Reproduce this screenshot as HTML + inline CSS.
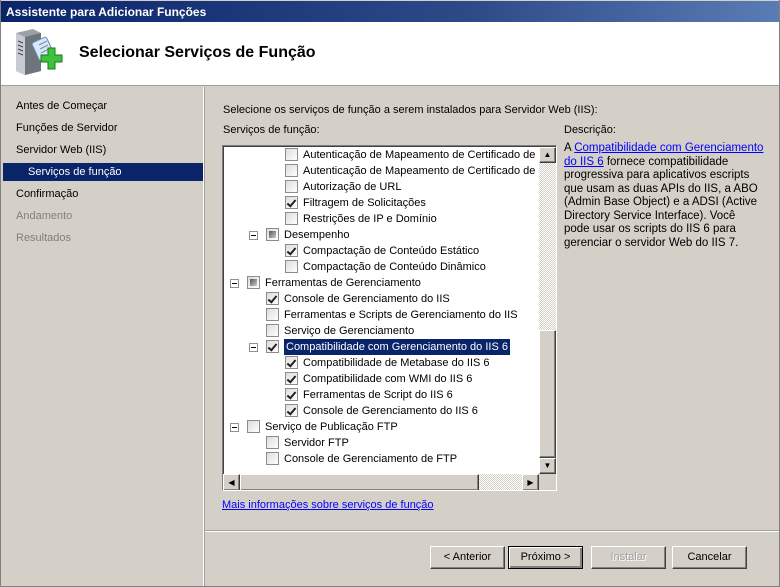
<!DOCTYPE html>
<html><head><meta charset="utf-8"><style>
*{margin:0;padding:0;box-sizing:border-box}
body{width:780px;height:587px;overflow:hidden;font-family:"Liberation Sans",Tahoma,sans-serif;font-size:11px;color:#000;background:#d4d0c8;position:relative}
.abs{position:absolute}
#title{left:0;top:0;width:780px;height:22px;background:linear-gradient(90deg,#0a246a,#2c4a88 60%,#5a7cb4);color:#fff;font-weight:bold;font-size:12px;line-height:22px;padding-left:5px;border:1px solid #d4d0c8;border-bottom:none}
#head{left:1px;top:22px;width:778px;height:64px;background:#fff;border-bottom:1px solid #a0a0a0}
#head h1{position:absolute;left:78px;top:22px;font-size:16px;font-weight:bold}
#left{left:1px;top:87px;width:202px;height:499px;background:#d4d0c8}
#sep{left:203px;top:87px;width:2px;height:499px;border-left:1px solid #fff;border-right:1px solid #a0a0a0}
.nav{position:absolute;left:15px;height:18px;line-height:18px}
.sel{left:3px;width:200px;background:#0a246a;color:#fff;padding-left:25px}
.dis{color:#808080}
#tree{left:222px;top:145px;width:335px;height:346px;background:#fff;border:1px solid;border-color:#808080 #fff #fff #808080;overflow:hidden}
#inner{position:absolute;left:0;top:0;width:316px;height:328px;overflow:hidden;border-top:1px solid #404040;border-left:1px solid #404040}
.row{position:absolute;height:16px;line-height:16px;white-space:nowrap}
.cb{position:absolute;width:13px;height:13px;border:1px solid #8c8c8c;background:linear-gradient(135deg,#dcdcdc,#fff)}
.ck::after{content:"";position:absolute;left:3px;top:1px;width:3px;height:7px;border:solid #222;border-width:0 2px 2px 0;transform:rotate(40deg)}
.pt::after{content:"";position:absolute;left:2px;top:2px;width:7px;height:7px;background:linear-gradient(135deg,#555,#ccc)}
.ex{position:absolute;width:9px;height:9px;border:1px solid #909090;background:#fff}
.ex::after{content:"";position:absolute;left:1px;top:3px;width:5px;height:1px;background:#000}
.hl{background:#0a246a;color:#fff;padding:0 2px;margin-left:-2px}
.sb{position:absolute;background:repeating-conic-gradient(#d4d0c8 0 25%,#fff 0 50%) 0 0/2px 2px}
.btn3{position:absolute;background:#d4d0c8;border:1px solid;border-color:#fff #404040 #404040 #fff;box-shadow:inset -1px -1px #808080}
.btn{position:absolute;top:546px;height:23px;width:75px;background:#d4d0c8;border:1px solid;border-color:#fff #404040 #404040 #fff;box-shadow:inset -1px -1px #808080;text-align:center;line-height:21px;font-size:11px}
a{color:#0000ff;text-decoration:underline}
</style></head><body>
<div id="title" class="abs">Assistente para Adicionar Funções</div>
<div id="head" class="abs">
<svg style="position:absolute;left:12px;top:5px" width="50" height="52" viewBox="0 0 50 52">
<path d="M3 6 L20 2 L28 6 L28 44 L12 48 L3 44Z" fill="#9aa0a8"/>
<path d="M3 6 L12 10 L12 48 L3 44Z" fill="#c8ccd2"/>
<path d="M12 10 L28 6 L28 44 L12 48Z" fill="#6e747c"/>
<g stroke="#444" stroke-width="1"><line x1="5" y1="14" x2="10" y2="16"/><line x1="5" y1="18" x2="10" y2="20"/><line x1="5" y1="22" x2="10" y2="24"/><line x1="5" y1="26" x2="10" y2="28"/></g>
<rect x="22" y="12" width="16" height="20" rx="2" fill="#d8e8f8" stroke="#6a8ab0" transform="rotate(-25 30 22)"/>
<g stroke="#7090b8"><line x1="26" y1="18" x2="34" y2="14"/><line x1="27" y1="22" x2="35" y2="18"/><line x1="28" y1="26" x2="36" y2="22"/></g>
<path d="M28 28h7v-7h7v7h7v7h-7v7h-7v-7h-7z" fill="#3cc23c" stroke="#1a7a1a"/>
</svg>
<h1>Selecionar Serviços de Função</h1></div>
<div id="left" class="abs">
<div class="nav" style="top:10px">Antes de Começar</div>
<div class="nav" style="top:32px">Funções de Servidor</div>
<div class="nav" style="top:54px">Servidor Web (IIS)</div>
<div class="nav sel" style="top:76px;left:2px">Serviços de função</div>
<div class="nav" style="top:98px">Confirmação</div>
<div class="nav dis" style="top:120px">Andamento</div>
<div class="nav dis" style="top:142px">Resultados</div>
</div>
<div id="sep" class="abs"></div>
<div class="abs" style="left:223px;top:104px">Selecione os serviços de função a serem instalados para Servidor Web (IIS):</div>
<div class="abs" style="left:223px;top:124px">Serviços de função:</div>
<div id="tree" class="abs"><div id="inner">
<div class="cb" style="left:61px;top:1px"></div><div class="row" style="left:79px;top:0">Autenticação de Mapeamento de Certificado de Cliente</div>
<div class="cb" style="left:61px;top:17px"></div><div class="row" style="left:79px;top:16px">Autenticação de Mapeamento de Certificado de Cliente</div>
<div class="cb" style="left:61px;top:33px"></div><div class="row" style="left:79px;top:32px">Autorização de URL</div>
<div class="cb ck" style="left:61px;top:49px"></div><div class="row" style="left:79px;top:48px">Filtragem de Solicitações</div>
<div class="cb" style="left:61px;top:65px"></div><div class="row" style="left:79px;top:64px">Restrições de IP e Domínio</div>
<div class="ex" style="left:25px;top:84px"></div><div class="cb pt" style="left:42px;top:81px"></div><div class="row" style="left:60px;top:80px">Desempenho</div>
<div class="cb ck" style="left:61px;top:97px"></div><div class="row" style="left:79px;top:96px">Compactação de Conteúdo Estático</div>
<div class="cb" style="left:61px;top:113px"></div><div class="row" style="left:79px;top:112px">Compactação de Conteúdo Dinâmico</div>
<div class="ex" style="left:6px;top:132px"></div><div class="cb pt" style="left:23px;top:129px"></div><div class="row" style="left:41px;top:128px">Ferramentas de Gerenciamento</div>
<div class="cb ck" style="left:42px;top:145px"></div><div class="row" style="left:60px;top:144px">Console de Gerenciamento do IIS</div>
<div class="cb" style="left:42px;top:161px"></div><div class="row" style="left:60px;top:160px">Ferramentas e Scripts de Gerenciamento do IIS</div>
<div class="cb" style="left:42px;top:177px"></div><div class="row" style="left:60px;top:176px">Serviço de Gerenciamento</div>
<div class="ex" style="left:25px;top:196px"></div><div class="cb ck" style="left:42px;top:193px"></div><div class="row hl" style="left:62px;top:192px">Compatibilidade com Gerenciamento do IIS 6</div>
<div class="cb ck" style="left:61px;top:209px"></div><div class="row" style="left:79px;top:208px">Compatibilidade de Metabase do IIS 6</div>
<div class="cb ck" style="left:61px;top:225px"></div><div class="row" style="left:79px;top:224px">Compatibilidade com WMI do IIS 6</div>
<div class="cb ck" style="left:61px;top:241px"></div><div class="row" style="left:79px;top:240px">Ferramentas de Script do IIS 6</div>
<div class="cb ck" style="left:61px;top:257px"></div><div class="row" style="left:79px;top:256px">Console de Gerenciamento do IIS 6</div>
<div class="ex" style="left:6px;top:276px"></div><div class="cb" style="left:23px;top:273px"></div><div class="row" style="left:41px;top:272px">Serviço de Publicação FTP</div>
<div class="cb" style="left:42px;top:289px"></div><div class="row" style="left:60px;top:288px">Servidor FTP</div>
<div class="cb" style="left:42px;top:305px"></div><div class="row" style="left:60px;top:304px">Console de Gerenciamento de FTP</div>
</div>
<div class="sb" style="left:316px;top:0;width:17px;height:328px;border-top:1px solid #404040"></div>
<div class="btn3" style="left:316px;top:1px;width:17px;height:16px;font-size:8px;text-align:center;line-height:14px">▲</div>
<div class="btn3" style="left:316px;top:184px;width:17px;height:128px"></div>
<div class="btn3" style="left:316px;top:312px;width:17px;height:16px;font-size:8px;text-align:center;line-height:14px">▼</div>
<div class="sb" style="left:0;top:328px;width:316px;height:17px"></div>
<div class="btn3" style="left:0;top:328px;width:17px;height:17px;font-size:8px;text-align:center;line-height:15px">◀</div>
<div class="btn3" style="left:17px;top:328px;width:239px;height:17px"></div>
<div class="btn3" style="left:299px;top:328px;width:17px;height:17px;font-size:8px;text-align:center;line-height:15px">▶</div>
<div style="position:absolute;left:316px;top:328px;width:17px;height:17px;background:#d4d0c8"></div>
</div>
<div class="abs" style="left:564px;top:124px">Descrição:</div>
<div class="abs" style="left:564px;top:142px;font-size:11.5px;line-height:13.5px;white-space:nowrap">A <a>Compatibilidade com Gerenciamento</a><br><a>do IIS 6</a> fornece compatibilidade<br>progressiva para aplicativos escripts<br>que usam as duas APIs do IIS, a ABO<br>(Admin Base Object) e a ADSI (Active<br>Directory Service Interface). Você<br>pode usar os scripts do IIS 6 para<br>gerenciar o servidor Web do IIS 7.</div>
<div class="abs" style="left:222px;top:499px"><a>Mais informações sobre serviços de função</a></div>
<div class="abs" style="left:205px;top:530px;width:575px;height:2px;border-top:1px solid #a0a0a0;border-bottom:1px solid #fff"></div>
<div class="btn" style="left:430px">&lt; Anterior</div>
<div class="btn" style="left:508px;border:1px solid #000;box-shadow:inset 1px 1px #fff,inset -2px -2px #808080">Próximo &gt;</div>
<div class="btn" style="left:591px;color:#a0a0a0;text-shadow:1px 1px #fff">Instalar</div>
<div class="btn" style="left:672px">Cancelar</div>
<div class="abs" style="left:0;top:0;width:780px;height:587px;border:1px solid #808080;border-top:none;pointer-events:none"></div>
</body></html>
